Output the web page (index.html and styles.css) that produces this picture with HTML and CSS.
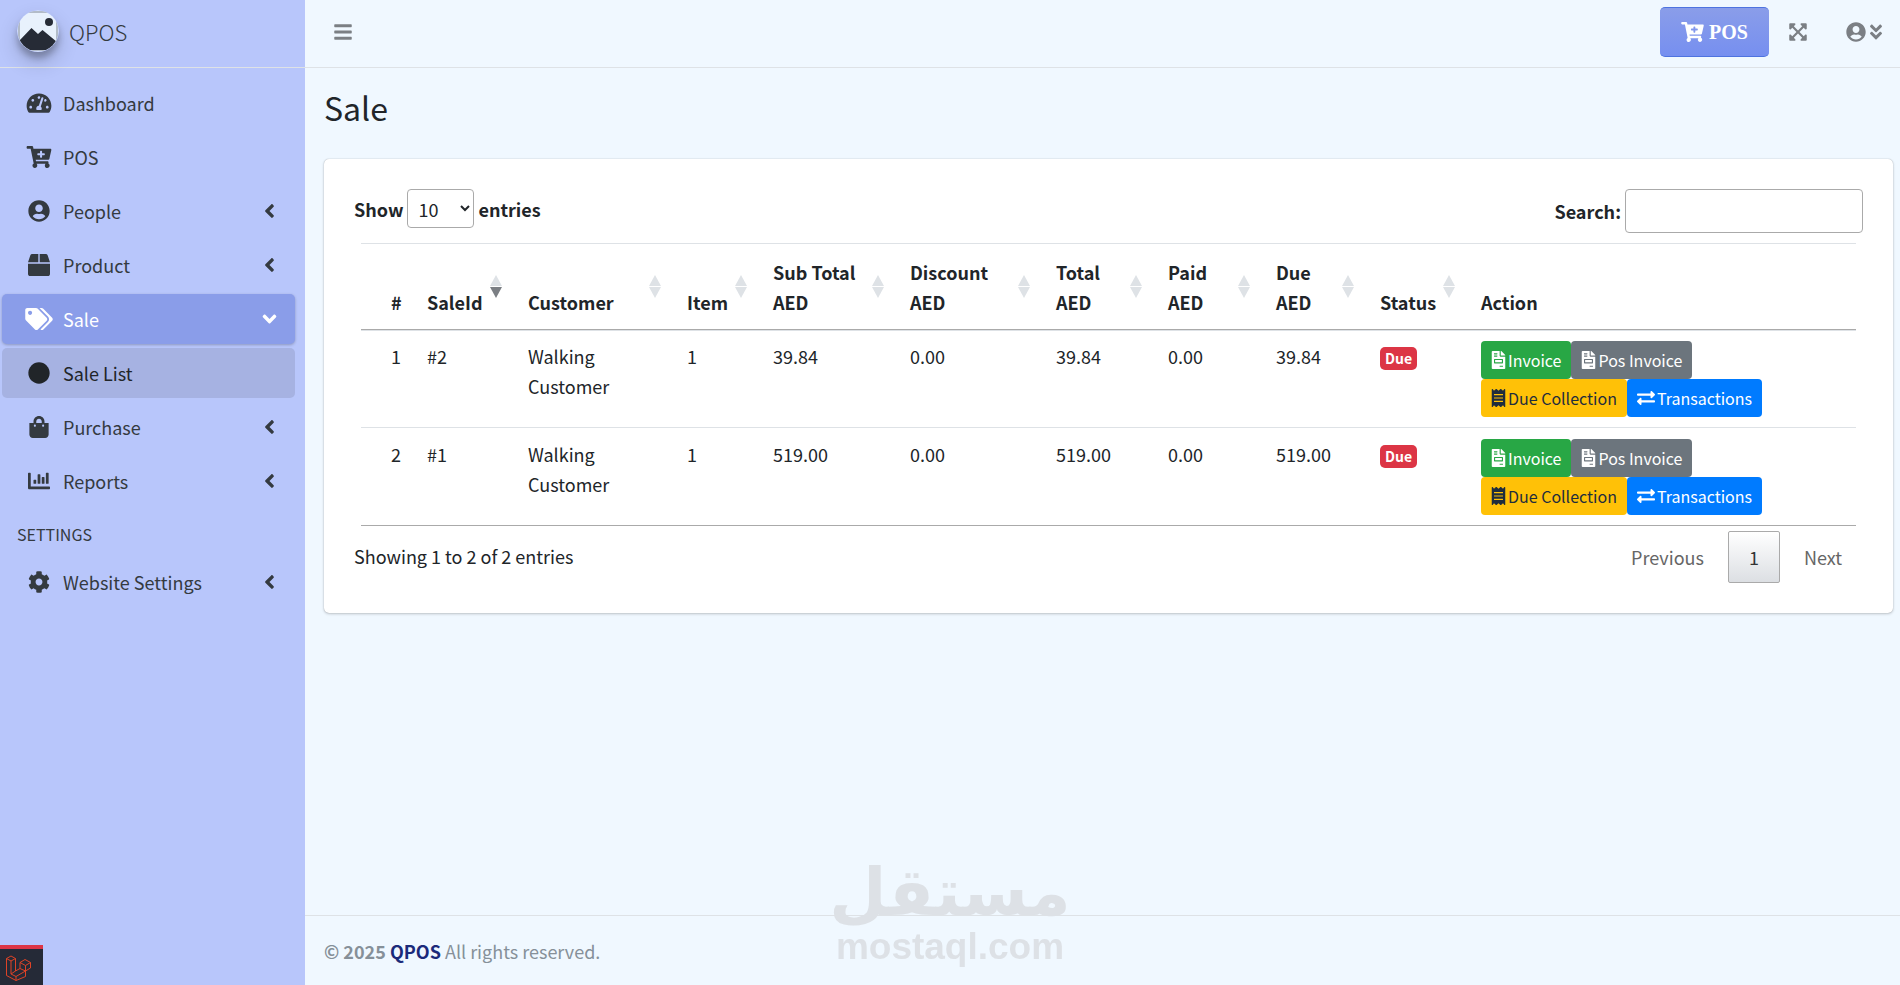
FILE: index.html
```html
<!DOCTYPE html>
<html lang="en">
<head>
<meta charset="utf-8">
<meta name="viewport" content="width=device-width, initial-scale=1">
<title>QPOS | Sale</title>
<link rel="stylesheet" href="styles.css">
</head>
<body>
<svg class="sprite" aria-hidden="true">
  <symbol id="gauge" viewBox="0 0 576 512"><path d="M288 32C128.94 32 0 160.94 0 320c0 52.8 14.25 102.26 39.06 144.8 5.61 9.62 16.3 15.2 27.44 15.2h443c11.14 0 21.83-5.58 27.44-15.2C561.75 422.26 576 372.8 576 320c0-159.06-128.94-288-288-288zm0 64c14.71 0 26.58 10.13 30.32 23.65-1.11 2.26-2.64 4.23-3.45 6.67l-9.22 27.67c-5.13 3.49-10.97 6.01-17.64 6.01-17.67 0-32-14.33-32-32S270.33 96 288 96zM96 384c-17.67 0-32-14.33-32-32s14.33-32 32-32 32 14.33 32 32-14.33 32-32 32zm48-160c-17.67 0-32-14.33-32-32s14.33-32 32-32 32 14.33 32 32-14.33 32-32 32zm246.77-72.41l-61.33 184C343.13 347.33 352 364.54 352 384c0 11.72-3.38 22.55-8.88 32H232.88c-5.5-9.45-8.88-20.28-8.88-32 0-33.94 26.5-61.43 59.9-63.59l61.34-184.01c4.17-12.56 17.73-19.45 30.36-15.17 12.57 4.19 19.35 17.79 15.17 30.36zm14.66 57.2l15.52-46.55c3.47-1.29 7.13-2.23 11.05-2.23 17.67 0 32 14.33 32 32s-14.33 32-32 32c-11.38-.01-20.89-6.28-26.57-15.22zM480 384c-17.67 0-32-14.33-32-32s14.33-32 32-32 32 14.33 32 32-14.33 32-32 32z"/></symbol>
  <symbol id="cart" viewBox="0 0 576 512"><path d="M504.717 320H211.572l6.545 32h268.418c15.401 0 26.816 14.301 23.403 29.319l-5.517 24.276C523.112 414.668 536 433.828 536 456c0 31.202-25.519 56.444-56.824 55.994-29.823-.429-54.35-24.631-55.155-54.447-.44-16.287 6.085-31.049 16.803-41.548H231.176C241.553 426.165 248 440.326 248 456c0 31.813-26.528 57.431-58.67 55.938-28.54-1.325-51.751-24.385-53.251-52.917-1.158-22.034 10.436-41.455 28.051-51.586L93.883 64H24C10.745 64 0 53.255 0 40V24C0 10.745 10.745 0 24 0h102.529c11.401 0 21.228 8.021 23.513 19.19L159.208 64H551.99c15.401 0 26.816 14.301 23.403 29.319l-47.273 208C525.637 312.246 515.923 320 504.717 320zM408 168h-48v-40c0-8.837-7.163-16-16-16h-16c-8.837 0-16 7.163-16 16v40h-48c-8.837 0-16 7.163-16 16v16c0 8.837 7.163 16 16 16h48v40c0 8.837 7.163 16 16 16h16c8.837 0 16-7.163 16-16v-40h48c8.837 0 16-7.163 16-16v-16c0-8.837-7.163-16-16-16z"/></symbol>
  <symbol id="user" viewBox="0 0 496 512"><path d="M248 8C111 8 0 119 0 256s111 248 248 248 248-111 248-248S385 8 248 8zm0 96c48.6 0 88 39.4 88 88s-39.4 88-88 88-88-39.4-88-88 39.4-88 88-88zm0 344c-58.7 0-111.3-26.6-146.5-68.2 18.8-35.4 55.6-59.8 98.5-59.8 2.4 0 4.8.4 7.1 1.1 13 4.2 26.6 6.9 40.9 6.9 14.3 0 28-2.7 40.9-6.9 2.3-.7 4.7-1.1 7.1-1.1 42.9 0 79.7 24.4 98.5 59.8C359.3 421.4 306.7 448 248 448z"/></symbol>
  <symbol id="box" viewBox="0 0 512 512"><path d="M509.5 184.6L458.9 32.8C452.4 13.2 434.1 0 413.4 0H272v192h238.7c-.4-2.5-.4-5-1.2-7.4zM240 0H98.6c-20.7 0-39 13.2-45.5 32.8L2.5 184.6c-.8 2.4-.8 4.9-1.2 7.4H240V0zM0 224v240c0 26.5 21.5 48 48 48h416c26.5 0 48-21.5 48-48V224H0z"/></symbol>
  <symbol id="tags" viewBox="0 0 640 512"><path d="M497.941 225.941L286.059 14.059A48 48 0 0 0 252.118 0H48C21.49 0 0 21.49 0 48v204.118a48 48 0 0 0 14.059 33.941l211.882 211.882c18.744 18.745 49.136 18.746 67.882 0l204.118-204.118c18.745-18.745 18.745-49.137 0-67.882zM112 160c-26.51 0-48-21.49-48-48s21.49-48 48-48 48 21.49 48 48-21.49 48-48 48zm513.941 133.823L421.823 497.941c-18.745 18.745-49.137 18.745-67.882 0l-.36-.36L527.64 323.522c16.999-16.999 26.36-39.6 26.36-63.64s-9.362-46.641-26.36-63.64L331.397 0h48.721a48 48 0 0 1 33.941 14.059l211.882 211.882c18.745 18.745 18.745 49.137 0 67.882z"/></symbol>
  <symbol id="dot" viewBox="0 0 512 512"><circle cx="256" cy="256" r="248"/></symbol>
  <symbol id="bag" viewBox="0 0 448 512"><path d="M352 160v-32C352 57.42 294.579 0 224 0 153.42 0 96 57.42 96 128v32H0v272c0 44.183 35.817 80 80 80h288c44.183 0 80-35.817 80-80V160h-96zm-192-32c0-35.29 28.71-64 64-64s64 28.71 64 64v32H160v-32zm160 120c-13.255 0-24-10.745-24-24s10.745-24 24-24 24 10.745 24 24-10.745 24-24 24zm-192 0c-13.255 0-24-10.745-24-24s10.745-24 24-24 24 10.745 24 24-10.745 24-24 24z"/></symbol>
  <symbol id="chart" viewBox="0 0 512 512"><path d="M332.8 320h38.4c6.4 0 12.8-6.4 12.8-12.8V172.8c0-6.4-6.4-12.8-12.8-12.8h-38.4c-6.4 0-12.8 6.4-12.8 12.8v134.4c0 6.4 6.4 12.8 12.8 12.8zm96 0h38.4c6.4 0 12.8-6.4 12.8-12.8V76.8c0-6.4-6.4-12.8-12.8-12.8h-38.4c-6.4 0-12.8 6.4-12.8 12.8v230.4c0 6.4 6.4 12.8 12.8 12.8zm-288 0h38.4c6.4 0 12.8-6.4 12.8-12.8v-70.4c0-6.4-6.4-12.8-12.8-12.8h-38.4c-6.4 0-12.8 6.4-12.8 12.8v70.4c0 6.4 6.4 12.8 12.8 12.8zm96 0h38.4c6.4 0 12.8-6.4 12.8-12.8V108.8c0-6.4-6.4-12.8-12.8-12.8h-38.4c-6.4 0-12.8 6.4-12.8 12.8v198.4c0 6.4 6.4 12.8 12.8 12.8zM496 384H64V80c0-8.84-7.16-16-16-16H16C7.16 64 0 71.16 0 80v336c0 17.67 14.33 32 32 32h464c8.84 0 16-7.16 16-16v-32c0-8.84-7.16-16-16-16z"/></symbol>
  <symbol id="cog" viewBox="0 0 512 512"><path d="M487.4 315.7l-42.6-24.6c4.3-23.2 4.3-47 0-70.2l42.6-24.6c4.9-2.8 7.1-8.6 5.5-14-11.1-35.6-30-67.8-54.7-94.6-3.8-4.1-10-5.1-14.8-2.3L380.8 110c-17.9-15.4-38.5-27.3-60.8-35.1V25.8c0-5.6-3.9-10.5-9.4-11.7-36.7-8.2-74.3-7.8-109.2 0-5.5 1.2-9.4 6.1-9.4 11.7V75c-22.2 7.9-42.8 19.8-60.8 35.1L88.7 85.5c-4.9-2.8-11-1.9-14.8 2.3-24.7 26.7-43.6 58.9-54.7 94.6-1.7 5.4.6 11.2 5.5 14L67.3 221c-4.3 23.2-4.3 47 0 70.2l-42.6 24.6c-4.9 2.8-7.1 8.6-5.5 14 11.1 35.6 30 67.8 54.7 94.6 3.8 4.1 10 5.1 14.8 2.3l42.6-24.6c17.9 15.4 38.5 27.3 60.8 35.1v49.2c0 5.6 3.9 10.5 9.4 11.7 36.7 8.2 74.3 7.8 109.2 0 5.5-1.2 9.4-6.1 9.4-11.7v-49.2c22.2-7.9 42.8-19.8 60.8-35.1l42.6 24.6c4.9 2.8 11 1.9 14.8-2.3 24.7-26.7 43.6-58.9 54.7-94.6 1.5-5.5-.7-11.3-5.6-14.1zM256 336c-44.1 0-80-35.9-80-80s35.9-80 80-80 80 35.9 80 80-35.9 80-80 80z"/></symbol>
  <symbol id="angle" viewBox="0 0 256 512"><path d="M31.7 239l136-136c9.4-9.4 24.6-9.4 33.9 0l22.6 22.6c9.4 9.4 9.4 24.6 0 33.9L127.9 256l96.4 96.4c9.4 9.4 9.4 24.6 0 33.9L201.7 409c-9.4 9.4-24.6 9.4-33.9 0l-136-136c-9.5-9.4-9.5-24.6-.1-34z"/></symbol>
  <symbol id="bars" viewBox="0 0 448 512"><path d="M16 132h416c8.837 0 16-7.163 16-16V76c0-8.837-7.163-16-16-16H16C7.163 60 0 67.163 0 76v40c0 8.837 7.163 16 16 16zm0 160h416c8.837 0 16-7.163 16-16v-40c0-8.837-7.163-16-16-16H16c-8.837 0-16 7.163-16 16v40c0 8.837 7.163 16 16 16zm0 160h416c8.837 0 16-7.163 16-16v-40c0-8.837-7.163-16-16-16H16c-8.837 0-16 7.163-16 16v40c0 8.837 7.163 16 16 16z"/></symbol>
  <symbol id="expand" viewBox="0 0 448 512"><path d="M448 344v112a23.94 23.94 0 0 1-24 24H312c-21.39 0-32.09-25.9-17-41l36.2-36.2L224 295.6 116.77 402.9 153 439c15.09 15.1 4.39 41-17 41H24a23.94 23.94 0 0 1-24-24V344c0-21.4 25.89-32.1 41-17l36.19 36.2L184.46 256 77.18 148.7 41 185c-15.1 15.1-41 4.4-41-17V56a23.94 23.94 0 0 1 24-24h112c21.39 0 32.09 25.9 17 41l-36.2 36.2L224 216.4l107.23-107.3L295 73c-15.09-15.1-4.39-41 17-41h112a23.94 23.94 0 0 1 24 24v112c0 21.4-25.89 32.1-41 17l-36.19-36.2L263.54 256l107.28 107.3L407 327.1c15.1-15.2 41-4.5 41 16.9z"/></symbol>
  <symbol id="down2" viewBox="0 0 320 512"><path d="M143 256.3L7 120.3c-9.4-9.4-9.4-24.6 0-33.9l22.6-22.6c9.4-9.4 24.6-9.4 33.9 0l96.4 96.4 96.4-96.4c9.4-9.4 24.6-9.4 33.9 0L313 86.3c9.4 9.4 9.4 24.6 0 33.9l-136 136c-9.4 9.5-24.6 9.5-34 .1zm34 192l136-136c9.4-9.4 9.4-24.6 0-33.9l-22.6-22.6c-9.4-9.4-24.6-9.4-33.9 0L160 352.1l-96.4-96.4c-9.4-9.4-24.6-9.4-33.9 0L7 278.3c-9.4 9.4-9.4 24.6 0 33.9l136 136c9.4 9.5 24.6 9.5 34 .1z"/></symbol>
  <symbol id="invoice" viewBox="0 0 384 512"><path d="M288 256H96v64h192v-64zm89-151L279.1 7c-4.5-4.5-10.6-7-17-7H256v128h128v-6.1c0-6.3-2.5-12.4-7-16.9zm-153 31V0H24C10.7 0 0 10.7 0 24v464c0 13.3 10.7 24 24 24h336c13.3 0 24-10.7 24-24V160H248c-13.2 0-24-10.8-24-24zM64 72c0-4.42 3.58-8 8-8h80c4.42 0 8 3.58 8 8v16c0 4.42-3.58 8-8 8H72c-4.42 0-8-3.58-8-8V72zm0 64c0-4.42 3.58-8 8-8h80c4.42 0 8 3.58 8 8v16c0 4.42-3.58 8-8 8H72c-4.42 0-8-3.58-8-8v-16zm256 304c0 4.42-3.58 8-8 8h-80c-4.42 0-8-3.58-8-8v-16c0-4.42 3.58-8 8-8h80c4.42 0 8 3.58 8 8v16zm0-200v96c0 8.84-7.16 16-16 16H80c-8.84 0-16-7.16-16-16v-96c0-8.84 7.16-16 16-16h224c8.84 0 16 7.16 16 16z"/></symbol>
  <symbol id="receipt" viewBox="0 0 384 512"><path d="M358.4 3.2L320 48 265.6 3.2a15.9 15.9 0 0 0-19.2 0L192 48 137.6 3.2a15.9 15.9 0 0 0-19.2 0L64 48 25.6 3.2C15-4.7 0 2.8 0 16v480c0 13.2 15 20.7 25.6 12.8L64 464l54.4 44.8a15.9 15.9 0 0 0 19.2 0L192 464l54.4 44.8a15.9 15.9 0 0 0 19.2 0L320 464l38.4 44.8c10.5 7.9 25.6.4 25.6-12.8V16c0-13.2-15-20.7-25.6-12.8zM320 360c0 4.4-3.6 8-8 8H72c-4.4 0-8-3.6-8-8v-16c0-4.4 3.6-8 8-8h240c4.4 0 8 3.6 8 8v16zm0-96c0 4.4-3.6 8-8 8H72c-4.4 0-8-3.6-8-8v-16c0-4.4 3.6-8 8-8h240c4.4 0 8 3.6 8 8v16zm0-96c0 4.4-3.6 8-8 8H72c-4.4 0-8-3.6-8-8v-16c0-4.4 3.6-8 8-8h240c4.4 0 8 3.6 8 8v16z"/></symbol>
  <symbol id="exchange" viewBox="0 0 512 512"><path d="M0 168v-16c0-13.255 10.745-24 24-24h360V80c0-21.367 25.899-32.042 40.971-16.971l80 80c9.372 9.373 9.372 24.569 0 33.941l-80 80C409.956 271.982 384 261.456 384 240v-48H24c-13.255 0-24-10.745-24-24zm488 152H128v-48c0-21.314-25.862-32.08-40.971-16.971l-80 80c-9.372 9.373-9.372 24.569 0 33.941l80 80C102.057 463.997 128 453.437 128 432v-48h360c13.255 0 24-10.745 24-24v-16c0-13.255-10.745-24-24-24z"/></symbol>
  <symbol id="sort" viewBox="0 0 12 23"><path class="sort-up" d="M6 0l6 11H0z"/><path class="sort-down" d="M6 23l6-11H0z"/></symbol>
</svg>

<div class="app">
  <aside class="sidebar">
    <a class="brand" href="#">
      <svg class="brand-logo" viewBox="0 0 42 42" aria-hidden="true">
        <defs><clipPath id="disc"><circle cx="21" cy="21" r="20.5"/></clipPath></defs>
        <g clip-path="url(#disc)">
          <rect width="42" height="42" fill="#e8f1fc"/>
          <rect x="2" y="2" width="38" height="38" rx="3" fill="none" stroke="#7d8694"/>
          <circle cx="32" cy="12" r="4" fill="#262b36"/>
          <path d="M2 31L14.500 18l6.500 6 4.500-4L40 32v8H2z" fill="#262b36"/>
        </g>
      </svg>
      <span>QPOS</span>
    </a>
    <nav class="menu">
      <a class="item" href="#"><span class="item-icon"><svg class="icon"><use href="#gauge"/></svg></span><span>Dashboard</span></a>
      <a class="item" href="#"><span class="item-icon"><svg class="icon"><use href="#cart"/></svg></span><span>POS</span></a>
      <a class="item" href="#"><span class="item-icon"><svg class="icon"><use href="#user"/></svg></span><span>People</span><svg class="caret"><use href="#angle"/></svg></a>
      <a class="item" href="#"><span class="item-icon"><svg class="icon"><use href="#box"/></svg></span><span>Product</span><svg class="caret"><use href="#angle"/></svg></a>
      <a class="item item-open" href="#"><span class="item-icon"><svg class="icon"><use href="#tags"/></svg></span><span>Sale</span><svg class="caret"><use href="#angle"/></svg></a>
      <a class="item item-current" href="#"><span class="item-icon"><svg class="icon"><use href="#dot"/></svg></span><span>Sale List</span></a>
      <a class="item" href="#"><span class="item-icon"><svg class="icon"><use href="#bag"/></svg></span><span>Purchase</span><svg class="caret"><use href="#angle"/></svg></a>
      <a class="item" href="#"><span class="item-icon"><svg class="icon"><use href="#chart"/></svg></span><span>Reports</span><svg class="caret"><use href="#angle"/></svg></a>
      <div class="menu-header">SETTINGS</div>
      <a class="item" href="#"><span class="item-icon"><svg class="icon"><use href="#cog"/></svg></span><span>Website Settings</span><svg class="caret"><use href="#angle"/></svg></a>
    </nav>
  </aside>

  <div class="page">
    <header class="topbar">
      <button class="tool" type="button" aria-label="Toggle menu"><svg class="icon"><use href="#bars"/></svg></button>
      <div class="tools">
        <a class="pos-button" href="#"><svg class="icon"><use href="#cart"/></svg><span>POS</span></a>
        <button class="tool" type="button" aria-label="Full screen"><svg class="icon"><use href="#expand"/></svg></button>
        <button class="tool tool-account" type="button" aria-label="Account"><svg class="icon"><use href="#user"/></svg><svg class="icon icon-narrow"><use href="#down2"/></svg></button>
      </div>
    </header>

    <main class="content">
      <h1 class="title">Sale</h1>
      <section class="card">
        <div class="controls">
          <label class="control" for="length">Show
            <select class="length" id="length"><option>10</option><option>25</option><option>50</option></select>
            entries</label>
          <label class="control" for="search">Search: <input class="search" id="search" type="search"></label>
        </div>
        <table class="sales">
          <colgroup><col class="c-num"><col class="c-id"><col class="c-customer"><col class="c-item"><col class="c-sub"><col class="c-discount"><col class="c-total"><col class="c-paid"><col class="c-due"><col class="c-status"><col class="c-action"></colgroup>
          <thead>
            <tr>
              <th>#</th>
              <th class="sorted"><div class="head">SaleId<svg class="sort"><use href="#sort"/></svg></div></th>
              <th><div class="head">Customer<svg class="sort"><use href="#sort"/></svg></div></th>
              <th><div class="head">Item<svg class="sort"><use href="#sort"/></svg></div></th>
              <th><div class="head">Sub Total<br>AED<svg class="sort"><use href="#sort"/></svg></div></th>
              <th><div class="head">Discount<br>AED<svg class="sort"><use href="#sort"/></svg></div></th>
              <th><div class="head">Total<br>AED<svg class="sort"><use href="#sort"/></svg></div></th>
              <th><div class="head">Paid<br>AED<svg class="sort"><use href="#sort"/></svg></div></th>
              <th><div class="head">Due<br>AED<svg class="sort"><use href="#sort"/></svg></div></th>
              <th><div class="head">Status<svg class="sort"><use href="#sort"/></svg></div></th>
              <th>Action</th>
            </tr>
          </thead>
          <tbody>
            <tr>
              <td>1</td><td>#2</td><td>Walking<br>Customer</td><td>1</td><td>39.84</td><td>0.00</td><td>39.84</td><td>0.00</td><td>39.84</td>
              <td><span class="badge">Due</span></td>
              <td>
                <div class="action-row"><a class="btn btn-green" href="#"><svg class="icon"><use href="#invoice"/></svg>Invoice</a><a class="btn btn-gray" href="#"><svg class="icon"><use href="#invoice"/></svg>Pos Invoice</a></div>
                <div class="action-row"><a class="btn btn-yellow" href="#"><svg class="icon"><use href="#receipt"/></svg>Due Collection</a><a class="btn btn-blue" href="#"><svg class="icon"><use href="#exchange"/></svg>Transactions</a></div>
              </td>
            </tr>
            <tr>
              <td>2</td><td>#1</td><td>Walking<br>Customer</td><td>1</td><td>519.00</td><td>0.00</td><td>519.00</td><td>0.00</td><td>519.00</td>
              <td><span class="badge">Due</span></td>
              <td>
                <div class="action-row"><a class="btn btn-green" href="#"><svg class="icon"><use href="#invoice"/></svg>Invoice</a><a class="btn btn-gray" href="#"><svg class="icon"><use href="#invoice"/></svg>Pos Invoice</a></div>
                <div class="action-row"><a class="btn btn-yellow" href="#"><svg class="icon"><use href="#receipt"/></svg>Due Collection</a><a class="btn btn-blue" href="#"><svg class="icon"><use href="#exchange"/></svg>Transactions</a></div>
              </td>
            </tr>
          </tbody>
        </table>
        <div class="table-footer">
          <div class="summary">Showing 1 to 2 of 2 entries</div>
          <div class="pager">
            <button class="pager-button" type="button">Previous</button>
            <button class="pager-button pager-current" type="button">1</button>
            <button class="pager-button" type="button">Next</button>
          </div>
        </div>
      </section>
    </main>

    <footer class="footer"><strong>© 2025 <a class="footer-link" href="#">QPOS</a></strong> All rights reserved.</footer>
  </div>
</div>

<div class="watermark">
  <span class="watermark-ar" lang="ar" dir="rtl">مستقل</span>
  <span class="watermark-en">mostaql.com</span>
</div>

<a class="debug" href="#" aria-label="Debug bar">
  <svg class="debug-logo" viewBox="0 0 50 52" aria-hidden="true"><path d="M1 7l9-5 9 5v25l9-5V15l10-6 11 6v11l-10 6v11L20 51 1 41zM1 7l9 5 9-5M10 12v26l10 5v8M10 38l9-6M20 43l19-11M28 15l11 6 10-6M39 21v11M28 27l11 5"/></svg>
</a>
</body>
</html>
```

FILE: styles.css
```css
* { box-sizing: border-box; }

body {
  margin: 0;
  background: #f0f8ff;
  color: #212529;
  font: 18px/30px "Noto Sans CJK SC", "Noto Sans", sans-serif;
}

a { color: inherit; text-decoration: none; }
button { border: 0; background: none; color: inherit; font: inherit; cursor: pointer; }

.sprite { position: absolute; width: 0; height: 0; }

.icon { flex: none; width: 20px; height: 20px; fill: currentColor; }
.icon-narrow { width: 12px; }

/* Sidebar */
.app { display: grid; grid-template-columns: 305px 1fr; min-height: 100vh; }
.sidebar { background: #b8c6fb; color: #343a40; }

.brand {
  display: flex;
  align-items: center;
  gap: 10px;
  height: 68px;
  padding: 0 17px 6px;
  border-bottom: 1px solid #dee2e6;
  font-size: 22px;
  font-weight: 300;
}

.brand-logo {
  width: 42px;
  height: 42px;
  border-radius: 50%;
  box-shadow: 0 10px 20px rgba(0, 0, 0, .19), 0 6px 6px rgba(0, 0, 0, .23);
}

.menu { display: flex; flex-direction: column; gap: 4px; padding: 10px 10px 0 2px; }

.item {
  display: flex;
  align-items: center;
  height: 50px;
  padding: 0 20px;
  border-radius: 5px;
}

.item-icon { display: flex; justify-content: center; width: 34px; margin-right: 7px; }
.item .icon { width: 28px; height: 22px; }
.caret { width: 11px; height: 22px; margin-left: auto; fill: currentColor; }

.item-open {
  background: #8a9de9;
  color: #fff;
  box-shadow: 0 1px 3px rgba(0, 0, 0, .24);
}
.item-open .caret { transform: rotate(-90deg); }
.item-current { background: #a6b2e2; color: #212529; }

.menu-header { padding: 9px 15px 4px; font-size: 16px; }

/* Top bar */
.page { display: flex; flex-direction: column; min-width: 0; }

.topbar {
  display: flex;
  align-items: center;
  justify-content: space-between;
  height: 68px;
  padding: 0 16px 4px 26px;
  border-bottom: 1px solid #dee2e6;
}

.tools { display: flex; align-items: center; gap: 17px; }
.tool { display: flex; align-items: center; gap: 4px; padding: 0 2px; color: #7b7f84; }
.tool-account { margin-left: 17px; }

.pos-button {
  display: flex;
  align-items: center;
  gap: 5px;
  height: 50px;
  padding: 0 21px;
  border: 1px solid #4e73df;
  border-width: 1px 0;
  border-radius: 5px;
  background: linear-gradient(#8a9de9, #768ff0);
  color: #fff;
  font: bold 20px/30px "Liberation Serif", serif;
}
.pos-button .icon { width: 23px; }

/* Content */
.content { flex: 1; padding: 18px 7px 30px 19px; }
.title { margin: 0 0 31px; font-size: 32px; font-weight: 400; line-height: 42px; }

.card {
  padding: 30px;
  border-radius: 5px;
  background: #fff;
  box-shadow: 0 0 1px rgba(0, 0, 0, .3), 0 1px 3px rgba(0, 0, 0, .2);
}

.controls { display: flex; align-items: flex-start; justify-content: space-between; margin-bottom: 10px; }
.control { display: flex; align-items: center; gap: 4px; font-weight: 700; }

.length, .search { border: 1px solid #aaa; border-radius: 4px; background: #fff; color: inherit; font: inherit; font-weight: 400; }
.length { width: 67px; height: 39px; padding: 4px 6px; }
.search { width: 238px; height: 44px; padding: 6px; }

.sales {
  width: calc(100% - 14px);
  margin: 0 7px;
  table-layout: fixed;
  border-collapse: collapse;
  border-bottom: 1px solid #aaa;
}
.c-num { width: 54px; }
.c-id { width: 101px; }
.c-customer { width: 159px; }
.c-item { width: 86px; }
.c-sub { width: 137px; }
.c-discount { width: 146px; }
.c-total { width: 112px; }
.c-paid { width: 108px; }
.c-due { width: 104px; }
.c-status { width: 101px; }

.sales td { padding: 11px 0 10px 12px; border-top: 1px solid #dee2e6; vertical-align: top; }
.sales th {
  padding: 13px 0 12px 12px;
  border-top: 1px solid #dee2e6;
  border-bottom: 1px solid #aaa;
  text-align: left;
  vertical-align: bottom;
}
.sales tbody tr:first-child td { border-top: 0; box-shadow: inset 0 1px #dee2e6; }
.sales th:first-child, .sales td:first-child { padding-left: 30px; }

.head { position: relative; display: flex; align-items: flex-end; height: 60px; padding-right: 14px; }
.sort { --down: #dee2e6; position: absolute; top: 18px; right: 14px; width: 12px; height: 23px; }
.sorted .sort { --down: #7b7f84; }
.sort-up { fill: #dee2e6; }
.sort-down { fill: var(--down); }

.badge {
  display: inline-block;
  padding: 0 5px;
  border-radius: 5px;
  background: #dc3545;
  color: #fff;
  font-size: 14px;
  font-weight: 700;
  line-height: 23px;
}

.action-row { display: flex; }
.btn {
  display: flex;
  align-items: center;
  gap: 2px;
  height: 38px;
  padding: 0 10px;
  border-radius: 4px;
  color: #fff;
  font-size: 16px;
}
.btn .icon { width: 15px; height: 18px; }
.btn-green { background: #28a745; }
.btn-gray { background: #6c757d; }
.btn-yellow { background: #ffc107; color: #1f2d3d; }
.btn-blue { background: #007bff; }
.btn-blue .icon { width: 18px; }

.table-footer { display: flex; justify-content: space-between; padding-top: 5px; }
.summary { padding-top: 10px; }
.pager { display: flex; gap: 3px; }
.pager-button { height: 52px; padding: 0 21px; border-radius: 2px; color: #666; }
.pager-current { padding: 0 20px; border: 1px solid #aaa; background: linear-gradient(#fff, #dcdfe3); color: #333; }

.footer { padding: 20px 19px 19px; border-top: 1px solid #dee2e6; color: #869099; }
.footer-link { color: #1b2a7a; }

/* Overlays */
.watermark {
  position: fixed;
  bottom: 14px;
  left: 50%;
  display: flex;
  flex-direction: column;
  align-items: center;
  color: #dde1e6;
  font-weight: 700;
  transform: translateX(-50%);
  pointer-events: none;
}
.watermark-ar { font-family: "DejaVu Sans", sans-serif; font-size: 66px; line-height: 60px; }
.watermark-en { font-family: "Liberation Sans", sans-serif; font-size: 37px; line-height: 48px; }

.debug {
  position: fixed;
  bottom: 0;
  left: 0;
  width: 43px;
  height: 40px;
  padding: 6px;
  border-top: 4px solid #dc3545;
  background: #252a37;
}
.debug-logo { display: block; width: 25px; height: 26px; fill: none; stroke: #dd4327; stroke-width: 2; }
```
